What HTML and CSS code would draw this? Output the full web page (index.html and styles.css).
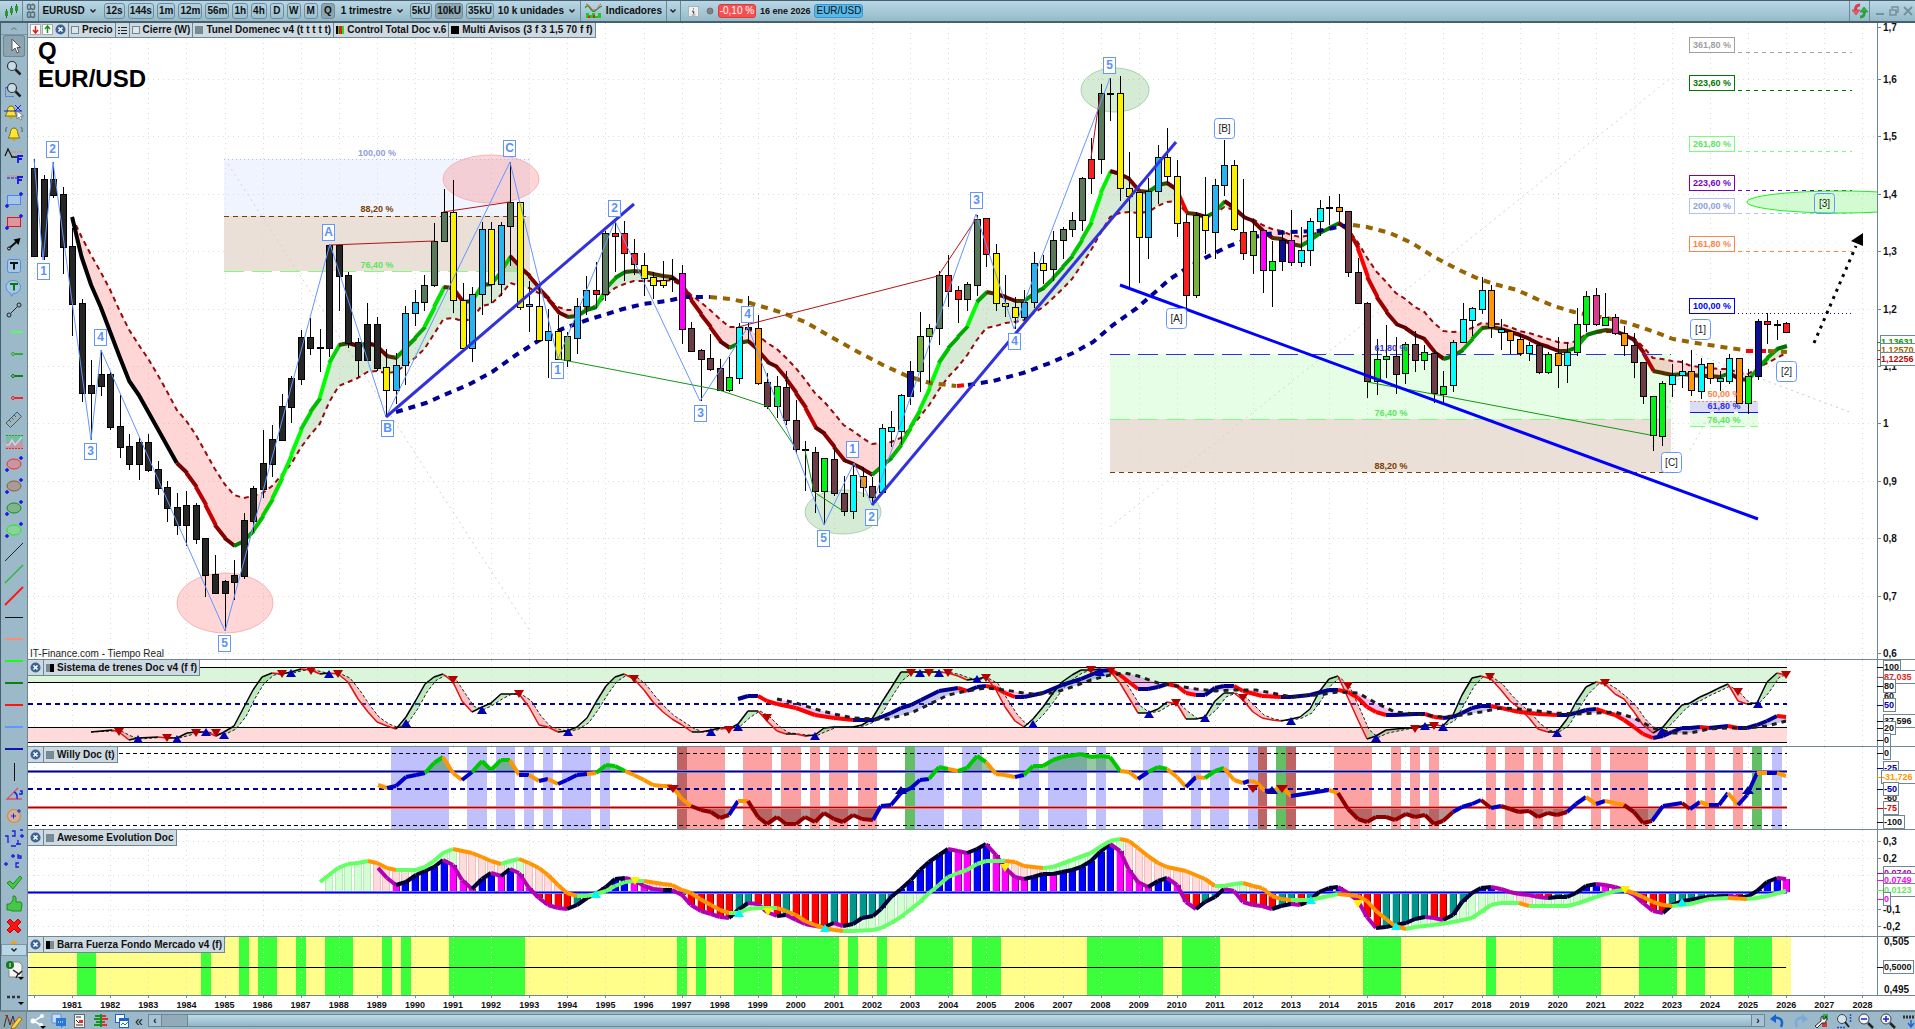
FILE: index.html
```html
<!DOCTYPE html>
<html lang="es">
<head>
<meta charset="utf-8">
<title>EUR/USD - 1 trimestre</title>
<link rel="stylesheet" href="styles.css">
</head>
<body>
<svg class="sprite" aria-hidden="true">
  <symbol id="chev" viewBox="0 0 8 8"><path d="M1.500 2.500 4 5l2.500-2.500" fill="none" stroke="#222" stroke-width="1.500"/></symbol>
  <symbol id="close" viewBox="0 0 12 12"><circle cx="6" cy="6" r="5.500" fill="#3c6496"/><path d="M3.800 3.800l4.400 4.400M8.200 3.800L3.800 8.200" stroke="#fff" stroke-width="1.800"/></symbol>
  <symbol id="bell" viewBox="0 0 22 22"><path d="M5 15c2-2 2-4 2.500-6.500C8 6 9.500 5 11 5s3 1 3.500 3.500C15 11 15 13 17 15z" fill="#ffe632" stroke="#7a6a10"/><path d="M9.500 15.500h3v2h-3z" fill="#c8a000"/></symbol>
  <symbol id="mag" viewBox="0 0 22 22"><circle cx="9" cy="9" r="4.500" fill="#c3dce8" stroke="#333" stroke-width="1.200"/><path d="M12.500 12.500l5 5" stroke="#222" stroke-width="2.500"/></symbol>
  <symbol id="marks" viewBox="0 0 22 22"><path d="M2 17h4M4 15v4M16 5h4M18 3v4" stroke="#1414e6" stroke-width="1.500"/></symbol>
  <symbol id="plug" viewBox="0 0 22 22"><circle cx="10" cy="11" r="1.500" fill="none" stroke="currentColor"/><path d="M12 11h8" stroke="currentColor" stroke-width="1.800"/></symbol>
</svg>

<div class="app">
<header class="topbar">
  <div class="cell logo"><svg width="16" height="16"><path d="M3.500 6v9M8.500 3v9M13.500 1v9" stroke="#1e6e1e"/><path d="M2 8h3v5H2zM7 5h3v5H7zM12 3h3v5h-3z" fill="#2d962d"/></svg></div>
  <div class="cell link"><svg width="10" height="16" fill="none" stroke="#5a6e78"><path d="M4.500 2v3a1.500 1.500 0 0 1-3 0V3.500a1 1 0 0 1 3-1M5.500 2.500a1 1 0 0 1 3 1V5a1.500 1.500 0 0 1-3 0M4.500 10v3a1.500 1.500 0 0 1-3 0v-2a1 1 0 0 1 3-1M5.500 10a1 1 0 0 1 3 1v2a1.500 1.500 0 0 1-3 0" stroke-width="1.500"/></svg></div>
  <button class="drop symbol-drop">EURUSD<svg class="chev"><use href="#chev"/></svg></button>
  <div class="frames">
    <button>12s</button><button>144s</button><button>1m</button><button>12m</button><button>56m</button><button>1h</button><button>4h</button><button>D</button><button>W</button><button>M</button><button class="on">Q</button>
  </div>
  <button class="drop term">1 trimestre<svg class="chev"><use href="#chev"/></svg></button>
  <div class="frames">
    <button>5kU</button><button class="on">10kU</button><button>35kU</button>
  </div>
  <button class="drop units">10 k unidades<svg class="chev"><use href="#chev"/></svg></button>
  <button class="drop indic"><svg width="17" height="16"><path d="M0 5c4-7 6 6 10 3s4-4 7-5" fill="none" stroke="#1e961e" stroke-width="1.300"/><path d="M1 1c4 0 5 7 9 6s3-5 6-6" fill="none" stroke="#e65050"/><path d="M1 15v-5h3v2h3v-2h3v3h3v-3h3v5z" fill="#1ec81e"/><path d="M3 15v-2h2v2zm5 0v-3h2v3z" fill="#e61e1e"/></svg>Indicadores</button>
  <button class="more" aria-label="Más indicadores"><svg class="chev"><use href="#chev"/></svg></button>
  <div class="status">
    <svg width="11" height="11"><rect x=".5" y=".5" width="10" height="10" fill="#f0f0f0" stroke="#aab4b9"/><path d="M5.500 2v2M4 5h2v3.500M3.500 9h4" stroke="#969696"/></svg>
    <svg width="8" height="8"><circle cx="4" cy="4" r="3" fill="#828282" stroke="#6e6e6e"/></svg>
    <span class="chg">-0,10 %</span><span class="date">16 ene 2026</span><span class="pair">EUR/USD</span>
  </div>
  <div class="winbtns">
    <button class="refresh" aria-label="Actualizar"><svg width="16" height="16"><path d="M8 2C4 2 3 5 4 8" fill="none" stroke="#dc3c46" stroke-width="3"/><path d="M0 7h8l-4 5z" fill="#f05a64" stroke="#b42832" stroke-width=".5"/><path d="M8 14c4 0 5-3 4-6" fill="none" stroke="#28a03c" stroke-width="3"/><path d="M8 9l4-5 4 5z" fill="#28b43c" stroke="#147828" stroke-width=".5"/></svg></button>
    <button aria-label="Minimizar"><svg width="10" height="10"><path d="M1 8h8" stroke="#78909c" stroke-width="2"/></svg></button>
    <button aria-label="Restaurar"><svg width="10" height="10" fill="none" stroke="#78909c" stroke-width="1.500"><path d="M3 3V1h6v5H7M1 4h6v5H1z"/></svg></button>
    <button aria-label="Cerrar"><svg width="10" height="10"><path d="M1 1l8 8M9 1L1 9" stroke="#78909c" stroke-width="2"/></svg></button>
  </div>
</header>

<nav class="tools" aria-label="Herramientas de dibujo">
  <button class="scroll" aria-label="Subir"><svg width="8" height="8"><path d="M1.500 5 4 2.500 6.500 5" fill="none" stroke="#5a6e78"/></svg></button>
  <button class="tool on" aria-label="Cursor"><svg><path d="M9 4v12l3-3 2 5 2-1-2-4.500h3.500z" fill="#fff" stroke="#555"/></svg></button>
  <button class="tool" aria-label="Zoom"><svg><use href="#mag"/></svg></button>
  <button class="tool" aria-label="Zoom de zona"><svg><path d="M2.500 8.500v9h9M2.500 8.500H6" fill="none" stroke="#3c6edc" stroke-dasharray="2 1"/><use href="#mag"/></svg></button>
  <button class="tool" aria-label="Alerta en precio"><svg><use href="#bell" x="-3"/><path d="M12 4l6 6M18 4l-6 6M1 10h18" stroke="#1e1edc"/><path d="M14 10v8l2-2 1.500 3 1.500-1-1.500-3h3z" fill="#fff" stroke="#555" stroke-width=".6"/></svg></button>
  <button class="tool" aria-label="Alerta"><svg><use href="#bell"/><path d="M4 4q-2 2-1 5M18 4q2 2 1 5" fill="none" stroke="#555"/></svg></button>
  <button class="tool" aria-label="Fibonacci extensión"><svg><path d="M2 11l3-7 4 8h5" fill="none" stroke="#111" stroke-width="1.200"/><path d="M8 7h12" stroke="#ff7828" stroke-dasharray="2 1"/><path d="M8 12h6" stroke="#111"/><path d="M15 18v-7h5M15 14h4" fill="none" stroke="#1414e6" stroke-width="1.800"/></svg></button>
  <button class="tool" aria-label="Fibonacci"><svg><path d="M4 9h14" stroke="#ff7828" stroke-dasharray="2 1"/><path d="M4 11h10" stroke="#1414e6" stroke-dasharray="3 1"/><path d="M15 17v-7h5M15 13h4" fill="none" stroke="#1414e6" stroke-width="1.800"/></svg></button>
  <button class="tool" aria-label="Rectángulo azul"><svg><rect x="4.500" y="6.500" width="13" height="9" fill="#a5c8e6" stroke="#5082f0"/><use href="#marks"/></svg></button>
  <button class="tool" aria-label="Rectángulo rojo"><svg><rect x="4.500" y="6.500" width="13" height="9" fill="#dc96a0" stroke="#e61414"/><use href="#marks"/></svg></button>
  <button class="tool" aria-label="Flecha"><svg><circle cx="6" cy="15.500" r="1.500" fill="none" stroke="#111"/><path d="M7 14.500l8-7" stroke="#111" stroke-width="2"/><path d="M17.500 5l-7 1.500 5 5.500z"/></svg></button>
  <button class="tool" aria-label="Texto"><svg><rect x="4.500" y="4.500" width="13" height="13" rx="2" fill="#a5c8e6" stroke="#5a8cdc"/><path d="M8 9V8h6v1M11 8v6.500" fill="none" stroke="#111" stroke-width="2"/></svg></button>
  <button class="tool" aria-label="Comentario"><svg><path d="M11 3.500a7 6.500 0 1 1-1 13l-1.500 3-1-3.500A7 6.500 0 0 1 11 3.500z" fill="#a5c8e6" stroke="#5a8cdc"/><path d="M8 8V7h6v1M11 7v6.500" fill="none" stroke="#0a780a" stroke-width="2"/></svg></button>
  <button class="tool" aria-label="Segmento"><svg fill="none" stroke="#222"><circle cx="6" cy="16" r="2"/><circle cx="16" cy="6" r="2"/><path d="M7.500 14.500l7-7"/></svg></button>
  <button class="tool light" aria-label="Horizontal verde claro"><svg><use href="#plug"/></svg></button>
  <button class="tool green" aria-label="Horizontal verde"><svg><use href="#plug"/></svg></button>
  <button class="tool dark" aria-label="Horizontal verde oscuro"><svg><use href="#plug"/></svg></button>
  <button class="tool red" aria-label="Horizontal roja"><svg><use href="#plug"/></svg></button>
  <button class="tool" aria-label="Regla"><svg><path d="M3 14L14 3l4.500 4.500-11 11z" fill="#a0b4be" stroke="#465a64"/><path d="M6 11l2 2M8.500 8.500l2 2M11 6l2 2" stroke="#465a64"/></svg></button>
  <button class="tool" aria-label="Canal"><svg><path d="M3 4h17v7H3z" fill="#78bea0"/><path d="M3 11h17v7H3z" fill="#c8969b"/><path d="M3 4.500h17" stroke="#28a028" stroke-dasharray="2 1"/><path d="M3 17.500h17" stroke="#e63232" stroke-dasharray="2 1"/><path d="M3 14h3l3-5 3 5 7-8" fill="none" stroke="#c8d2ff" stroke-width="1.500"/></svg></button>
  <button class="tool" aria-label="Elipse roja"><svg><ellipse cx="11" cy="11" rx="7" ry="5" fill="#c896a0" stroke="#ff2828"/><use href="#marks"/></svg></button>
  <button class="tool" aria-label="Elipse marrón"><svg><ellipse cx="11" cy="11" rx="7" ry="5" fill="#aa9b96" stroke="#8c5a32"/><use href="#marks"/></svg></button>
  <button class="tool" aria-label="Elipse verde"><svg><ellipse cx="11" cy="11" rx="7" ry="5" fill="#82b48c" stroke="#148c1e"/><use href="#marks"/></svg></button>
  <button class="tool" aria-label="Elipse verde claro"><svg><ellipse cx="11" cy="11" rx="7" ry="5" fill="#8cd296" stroke="#14f01e"/><use href="#marks"/></svg></button>
  <button class="tool" aria-label="Línea negra"><svg><path d="M2 20L20 2" stroke="#222"/></svg></button>
  <button class="tool" aria-label="Línea verde"><svg><path d="M2 20L20 2" stroke="#32b432" stroke-width="1.500"/></svg></button>
  <button class="tool" aria-label="Línea roja"><svg><path d="M2 20L20 2" stroke="#ff1414" stroke-width="1.800"/></svg></button>
  <button class="tool" aria-label="Nivel negro"><svg><path d="M2 10.500h18" stroke="#111"/></svg></button>
  <button class="tool" aria-label="Nivel salmón"><svg><path d="M2 10h18" stroke="#fa8c78" stroke-width="2"/></svg></button>
  <button class="tool" aria-label="Nivel verde claro"><svg><path d="M2 10h18" stroke="#14ff14" stroke-width="2"/></svg></button>
  <button class="tool" aria-label="Nivel verde"><svg><path d="M2 10h18" stroke="#0a820a" stroke-width="2"/></svg></button>
  <button class="tool" aria-label="Nivel rojo"><svg><path d="M2 10h18" stroke="#ff1414" stroke-width="2"/></svg></button>
  <button class="tool" aria-label="Nivel azul claro"><svg><path d="M2 10h18" stroke="#6496ff" stroke-width="2"/></svg></button>
  <button class="tool" aria-label="Nivel azul"><svg><path d="M2 10h18" stroke="#1414aa" stroke-width="2"/></svg></button>
  <button class="tool" aria-label="Vertical"><svg><path d="M11.500 2v18" stroke="#111"/></svg></button>
  <button class="tool" aria-label="Ángulo"><svg><path d="M19 16H4L15 5" fill="none" stroke="#dc5064" stroke-width="1.300"/><path d="M11 9q4 2 3 7M17 8h2v3h-3" fill="none" stroke="#1e1edc" stroke-width="1.500"/></svg></button>
  <button class="tool" aria-label="Círculo"><svg><circle cx="11" cy="11" r="6.500" fill="#c8b4a0" stroke="#f08232" stroke-width="1.200"/><path d="M8 11h5M10.500 8.500v5M14 6h4M16 4v4" stroke="#1e1edc"/></svg></button>
  <button class="tool" aria-label="Ondas de Elliott"><svg><path d="M3 8l4 8 4-11 3 9 5-10" fill="none" stroke="#8caaf0"/><path d="M2 9h3v7M9 4h3v5H9M13 17h5M17 3h3M15 13v5M8 19h5M17 9h4M19 7v4" fill="none" stroke="#1e1edc" stroke-width="1.300"/></svg></button>
  <button class="tool" aria-label="Onda correctiva"><svg><path d="M3 16l7-11 4 10 4-6" fill="none" stroke="#8caaf0"/><path d="M1 15h4M3 13v4M8 7h4M10 5v4M15 5v4h3V7h-3M16 14h-3v4h3" fill="none" stroke="#1e1edc" stroke-width="1.300"/></svg></button>
  <button class="tool" aria-label="Válido"><svg><path d="M4 12l3-2 3 3 7-8 2 2-9 11z" fill="#46c846" stroke="#1e8c1e"/></svg></button>
  <button class="tool" aria-label="Me gusta"><svg><path d="M4 11h3l3-4V3h2l1 2v4h5l1 2-1 7H9l-2-1H4z" fill="#46c846" stroke="#1e8c1e"/></svg></button>
  <button class="tool" aria-label="Borrar"><svg><path d="M7 4l4 4 4-4 3 3-4 4 4 4-3 3-4-4-4 4-3-3 4-4-4-4z" fill="#fa1414" stroke="#c80000"/></svg></button>
  <div class="tool-cut"><svg width="22" height="7"><path d="M11 3l4 4H7z" fill="#f0a01e"/></svg></div>
  <button class="scroll down" aria-label="Bajar"><svg class="chev"><use href="#chev"/></svg></button>
  <button class="tool tall" aria-label="Ajustes de dibujo"><svg><path d="M9 3h7l3 3v12H6v-7" fill="#f5f5f5" stroke="#888"/><circle cx="7" cy="6" r="4" fill="#14781e"/><path d="M7 4v4" stroke="#fff"/><path d="M10 11l6 4 3-3M15 15l-2 4" stroke="#222" stroke-width="1.500" fill="none"/><path d="M15 18h6l-3 3z"/></svg></button>
  <button class="tool tall" aria-label="Más"><svg><path d="M4 11h3M9 11h3M14 11h3" stroke="#333" stroke-width="2.500"/><path d="M15 16h6l-3 3z"/></svg></button>
</nav>

<main class="charts">
  <section class="panel">
    <svg class="plot" id="price" role="img" aria-label="EUR/USD trimestral"></svg>
    <div class="legend main-legend">
      <span class="ico"><svg width="36" height="12"><rect x=".5" y=".5" width="10" height="10" fill="#fff" stroke="#aaa"/><path d="M5.500 2v7M3 6l2.500 3L8 6" stroke="#dc1e1e" stroke-width="1.500" fill="none"/><rect x="12.500" y=".5" width="10" height="10" fill="#fff" stroke="#aaa"/><path d="M17.500 9V2M15 5l2.500-3L20 5" stroke="#14961e" stroke-width="1.500" fill="none"/><use href="#close" x="25" width="11" height="11"/></svg></span>
      <span><i class="sq"></i>Precio</span>
      <span class="list"><svg width="9" height="9"><path d="M0 1.500h2M0 4.500h2M0 7.500h2M3 1.500h6M3 4.500h6M3 7.500h6" stroke="#222"/></svg></span>
      <span><i class="sq"></i>Cierre (W)</span>
      <span><i class="sq grey"></i>Tunel Domenec v4 (t t t t t)</span>
      <span><i class="sq multi"></i>Control Total Doc v.6</span>
      <span><i class="sq black"></i>Multi Avisos (3 f 3 1,5 70 f f)</span>
    </div>
    <h1 class="title">Q<br>EUR/USD</h1>
  </section>
  <section class="panel">
    <svg class="plot" id="trenes" role="img" aria-label="Sistema de trenes"></svg>
    <div class="legend"><button aria-label="Cerrar panel"><svg width="11" height="11"><use href="#close"/></svg></button><span><i class="sq half"></i>Sistema de trenes Doc v4 (f f)</span></div>
  </section>
  <section class="panel">
    <svg class="plot" id="willy" role="img" aria-label="Willy Doc"></svg>
    <div class="legend"><button aria-label="Cerrar panel"><svg width="11" height="11"><use href="#close"/></svg></button><span><i class="sq grey"></i>Willy Doc (t)</span></div>
  </section>
  <section class="panel">
    <svg class="plot" id="awesome" role="img" aria-label="Awesome Evolution"></svg>
    <div class="legend"><button aria-label="Cerrar panel"><svg width="11" height="11"><use href="#close"/></svg></button><span><i class="sq grey"></i>Awesome Evolution Doc</span></div>
  </section>
  <section class="panel">
    <svg class="plot" id="barra" role="img" aria-label="Barra Fuerza"></svg>
    <div class="legend"><button aria-label="Cerrar panel"><svg width="11" height="11"><use href="#close"/></svg></button><span><i class="sq half rev"></i>Barra Fuerza Fondo Mercado v4 (f)</span></div>
  </section>
  <section class="panel years"><svg class="plot" id="years" role="img" aria-label="Años"></svg></section>
</main>

<footer class="bottombar">
  <button class="pencil" aria-label="Dibujar"><svg width="20" height="16"><path d="M1 14L4 2l3 10 3-9 2 8" fill="none" stroke="#333"/><path d="M2 2l10 11" stroke="#dc3232"/><path d="M9 13l7-9 3 2-7 9-4 1z" fill="#ffd23c" stroke="#a06e14"/></svg></button>
  <button aria-label="Compartir"><svg width="16" height="16"><path d="M12 3L4 8l8 5" fill="none" stroke="#fff" stroke-width="1.500"/><circle cx="12" cy="3" r="2" fill="#fff"/><circle cx="3" cy="8" r="2.500" fill="#fff"/><circle cx="11" cy="12" r="2" fill="#fff"/><path d="M10 13h6l-3 3z"/></svg></button>
  <button aria-label="Chat"><svg width="16" height="16"><rect x="1" y="1" width="9" height="9" rx="1" fill="#c8dcff" stroke="#5a8cdc"/><path d="M5 5h10v8h-3l-2 2v-2H5z" fill="#2878dc"/><path d="M7 9h6" stroke="#fff" stroke-dasharray="1 1"/></svg></button>
  <button aria-label="Órdenes"><svg width="16" height="16"><rect x="2.500" y="1.500" width="10" height="13" fill="#f5f5f5" stroke="#666"/><path d="M4 4h5M4 7l3 3M4 12h7" stroke="#333"/><path d="M7 7h4v3H7z" fill="#dc3232"/></svg></button>
  <button aria-label="Libro"><svg width="16" height="16"><path d="M2 3h6M1 6h7M3 9h5M1 12h7" stroke="#14961e" stroke-width="2"/><path d="M8 3h5M8 6h7M8 9h4M8 12h6" stroke="#dc3232" stroke-width="2"/><path d="M8 1v13" stroke="#14961e" stroke-width="2"/></svg></button>
  <button aria-label="Ventanas"><svg width="16" height="16"><rect x="1.500" y="1.500" width="9" height="8" fill="#fff" stroke="#1e64c8"/><rect x="5.500" y="5.500" width="9" height="9" fill="#fff" stroke="#1e64c8"/><path d="M6 7h9" stroke="#1e64c8" stroke-width="2"/><path d="M7 12l2-2 2 2 3-3" fill="none" stroke="#14961e"/></svg></button>
  <button class="quo" aria-label="Contraer">«</button>
  <div class="track"><button aria-label="Izquierda">‹</button><div class="thumb"></div><button aria-label="Derecha">›</button></div>
  <div class="navbtns">
    <button aria-label="Deshacer"><svg width="16" height="16"><path d="M4 5c6-1 10 2 7 9" fill="none" stroke="#1464d2" stroke-width="2.500"/><path d="M0 6l6-5v9z" fill="#1464d2"/></svg></button>
    <button aria-label="Rehacer"><svg width="16" height="16"><path d="M12 5c-6-1-10 2-7 9" fill="none" stroke="#78aadc" stroke-width="2.500"/><path d="M16 6l-6-5v9z" fill="#78aadc"/></svg></button>
    <button aria-label="Configurar"><svg width="16" height="16"><path d="M9 1h5v6H9z" fill="#28b43c"/><path d="M8 9h5v5H8z" fill="#dc3232"/><path d="M1 13l6-5V4l2-1v3h2l1-3 1 3-2 4H8l-5 5z" stroke="#333" fill="#eee"/></svg></button>
    <button aria-label="Zoom automático"><svg width="16" height="16"><circle cx="6" cy="6" r="4.500" fill="#d2e6f0" stroke="#444"/><path d="M9 9l4 5" stroke="#222" stroke-width="2"/><path d="M14.500 1v9M1 14.500h9" stroke="#1e50dc" stroke-width="1.500" stroke-dasharray="2 1"/></svg></button>
    <button aria-label="Alejar"><svg width="16" height="16"><circle cx="6" cy="6" r="5" fill="#f0f5fa" stroke="#444"/><path d="M10 10l5 5" stroke="#222" stroke-width="2.500"/><path d="M3 6h6" stroke="#1e1edc" stroke-width="1.500"/></svg></button>
    <button aria-label="Acercar"><svg width="16" height="16"><circle cx="6" cy="6" r="5" fill="#f0f5fa" stroke="#444"/><path d="M10 10l5 5" stroke="#222" stroke-width="2.500"/><path d="M3 6h6M6 3v6" stroke="#1e1edc" stroke-width="1.500"/></svg></button>
    <button aria-label="Ocultar barra"><svg width="13" height="16"><path d="M1 4h12" stroke="#333" stroke-width="3" stroke-dasharray="2 1"/><path d="M9 7v6M6 10l3 4 3-4" stroke="#1e64dc" fill="none" stroke-width="1.500"/></svg></button>
  </div>
</footer>
</div>
<script src="chart.js"></script>
</body>
</html>
```
FILE: styles.css
```css
* { box-sizing: border-box; }
html, body { height: 100%; }
body { margin: 0; font: bold 10px/12px "Liberation Sans", Arial, sans-serif; color: #111; overflow: hidden; }
button { font: inherit; color: inherit; border: 0; padding: 0; margin: 0; background: none; display: flex; align-items: center; justify-content: center; }
svg { display: block; flex: none; }
.sprite { position: absolute; width: 0; height: 0; }
.chev { width: 8px; height: 8px; }

.app { display: grid; height: 100vh; grid-template-columns: 28px minmax(0, 1fr); grid-template-rows: 23px minmax(0, 1fr) 19px; }

.topbar { grid-column: 1 / -1; display: flex; align-items: stretch; background: linear-gradient(#b9d7e6, #96bac9); border-top: 1px solid #46606e; border-bottom: 2px solid #46606e; }
.cell { display: flex; align-items: center; justify-content: center; border-right: 1px solid #6e8791; }
.logo { width: 23px; }
.link { width: 16px; }
.drop { gap: 4px; }
.symbol-drop { width: 61px; }
.frames { display: flex; align-items: center; gap: 3px; }
.symbol-drop + .frames { margin-left: 4px; }
.frames button { height: 16px; padding: 0 1px; border: 1px solid #6e8c9b; border-radius: 3px; min-width: 14px; }
.frames .on { background: #8ca5b1; }
.term { width: 75px; }
.units { width: 87px; border-right: 1px solid #6e8791; }
.indic { width: 86px; border-right: 1px solid #6e8791; }
.more { width: 14px; border-right: 1px solid #6e8791; }
.status { display: flex; align-items: center; gap: 4px; padding-left: 7px; font-weight: normal; }
.status svg:first-child { margin-right: 3px; }
.chg { background: #f55050; border: 1px solid #dc3c3c; border-radius: 3px; color: #fff; width: 38px; text-align: center; }
.date { font-weight: bold; font-size: 9px; }
.pair { background: #55b9eb; border: 1px solid #3c96c8; border-radius: 3px; width: 49px; text-align: center; }
.winbtns { margin-left: auto; display: flex; }
.winbtns button { width: 14px; }
.winbtns .refresh { width: 21px; border: solid #6e8791; border-width: 0 1px; margin-right: 3px; }

.tools { display: flex; flex-direction: column; background: #9bb9c8; border-left: 1px solid #46606e; border-right: 1px solid #6e8791; overflow: hidden; }
.scroll { height: 12px; width: 100%; flex: none; border-bottom: 1px solid #7d96a3; }
.scroll.down { border: 1px solid #7d96a3; background: #b9d7e6; }
.tool { width: 22px; height: 22px; margin-left: 2px; flex: none; border-radius: 3px; }
.tool svg { width: 22px; height: 22px; }
.tool.on { background: #8ca5b1; box-shadow: inset 0 0 0 1px #6e8791; }
.tool.tall { height: 27px; }
.tool.light { color: #5aff5a; }
.tool.green { color: #28aa28; }
.tool.dark { color: #0a780a; }
.tool.red { color: #ff1414; }
.tool-cut { height: 7px; flex: none; padding-left: 2px; }

.charts { display: grid; grid-template-rows: minmax(0, 1fr) 87px 83px 107px 59px 14px; background: #fff; }
.panel { position: relative; border-bottom: 1px solid #6e8791; min-height: 0; }
.panel.years { border-bottom: 0; }
.plot { width: 100%; height: 100%; overflow: hidden; }
.legend { position: absolute; left: 0; top: 0; display: flex; height: 16px; background: #cddae1; border: solid #6e8791; border-width: 0 1px 1px 0; }
.main-legend { height: 15px; }
.legend > * { display: flex; align-items: center; gap: 3px; padding: 0 2px; border-left: 1px solid #6e8791; white-space: nowrap; }
.legend > :first-child { border-left: 0; padding: 0 2px; }
.legend .sq { width: 8px; height: 8px; border: 1px solid #78878f; background: #dce6eb; }
.legend .grey { background: #788c96; }
.legend .black { background: #000; border-color: #000; }
.legend .half { background: linear-gradient(90deg, #788c96 50%, #000 50%); border: 0; }
.legend .rev { background: linear-gradient(90deg, #000 50%, #788c96 50%); }
.legend .multi { background: linear-gradient(90deg, #000 20%, #1edc1e 20% 40%, #e61e1e 40% 80%, #1edc1e 80%); border: 0; }
.title { position: absolute; left: 10px; top: 14px; margin: 0; font-size: 24px; line-height: 28px; color: #000; }

.bottombar { grid-column: 1 / -1; display: flex; align-items: center; background: #9bb9c8; border-top: 2px solid #6e8791; gap: 5px; }
.bottombar .pencil { width: 27px; margin-right: -2px; height: 100%; background: #8ca5b1; border-right: 1px solid #6e8791; }
.quo { font-size: 14px; font-weight: normal; }
.track { flex: 1; display: flex; height: 13px; background: linear-gradient(#bddbe9, #91b6c6); border: 1px solid #6e8791; }
.track button { width: 13px; background: #a5c3d2; border-right: 1px solid #6e8791; }
.track button:last-child { margin-left: auto; border-left: 1px solid #6e8791; border-right: 0; }
.thumb { width: 26px; background: #91abb9; border-right: 1px solid #6e8791; }
.navbtns { display: flex; gap: 6px; }

.t9 { font: bold 9px "Liberation Sans", Arial, sans-serif; }
.t10 { font: bold 10px "Liberation Sans", Arial, sans-serif; }
.tag { font: bold 12px "Liberation Sans", Arial, sans-serif; }
.plain { font: 10px "Liberation Sans", Arial, sans-serif; }
```
FILE: chart.js
```js
// Design space: plots start at x=28, quarterly bars are 9.523 units apart.
const X0 = 28, DW = 1887, BAR0 = 34, STEP = 9.523, AXIS = 1877;
const barX = i => BAR0 + STEP * i;

// Quarterly candles: colour, body top, body bottom, high, low
const CANDLES = `k168,256,159,256 k179,256,175,260 k179,195,162,198 k194,247,187,274 k246,304,228,336 k303,393,299,402 k385,393,360,440 k374,386,350,396 k374,427,371,430 k426,447,395,458
k446,464,434,470 k442,464,438,480 k442,470,434,472 k469,488,461,495 k487,508,481,522 k507,525,493,535 k505,525,491,546 k505,539,503,544 k538,575,538,597 k574,593,555,594
k581,593,580,631 k575,582,560,600 k520,576,513,579 k488,521,486,532 k463,489,430,498 k439,464,425,477 k406,440,394,440 k378,407,376,423 k337,379,330,385 k337,348,318,355
k347,348,329,372 k245,348,244,357 k245,276,245,311 k275,343,272,348 k342,360,338,377 k324,360,303,361 k324,368,317,371 Y367,390,349,417 b365,390,353,404 b313,365,306,385
b302,313,290,326 g285,302,275,311 g241,285,223,287 g212,241,189,241 Y212,300,180,313 Y300,348,283,348 b294,348,287,362 b229,294,222,315 Y229,284,222,303 b225,284,222,296
g202,226,162,266 Y202,307,202,310 b304,306,281,332 Y306,340,281,340 b331,340,309,378 Y331,359,315,360 L336,360,332,367 b306,338,298,354 b290,306,276,315 R290,294,262,308
g233,294,231,301 R233,236,221,272 R233,253,221,281 R253,264,239,275 Y265,278,253,296 Y277,285,272,299 Y280,285,261,288 k278,279,259,292 M273,329,265,344 W328,351,322,352
W350,359,349,401 W358,369,334,371 W368,390,359,390 G377,390,357,392 C327,378,323,384 k327,329,296,341 O328,383,315,385 W382,406,373,409 G386,406,376,418 W387,420,371,425
W420,449,400,454 k449,450,441,491 W452,491,447,513 G458,491,458,525 W459,493,447,496 W493,511,476,516 C475,511,463,519 O476,487,467,497 W486,497,477,505 C428,492,424,492
C427,431,411,447 C395,431,394,445 N371,396,361,405 L336,371,312,392 L328,336,324,383 g275,328,271,345 R275,291,255,307 R290,299,286,323 g284,299,282,311 g219,285,215,296
R218,254,218,267 Y253,303,244,311 Y303,306,275,317 Y307,317,297,329 b302,317,290,320 b263,302,252,308 Y263,270,255,284 g240,269,231,281 g229,240,227,259 g220,229,212,237
g178,220,177,231 R159,178,138,194 g93,159,84,174 k93,94,78,121 Y93,188,76,201 Y188,196,152,287 Y192,237,192,283 b191,237,178,259 b157,191,145,204 Y157,176,128,183
Y176,223,160,237 R222,295,214,317 L215,295,212,298 Y215,230,177,254 b185,232,179,259 b165,185,140,196 Y165,229,160,231 R232,253,179,260 L231,255,219,274 M230,270,230,293
G261,270,241,307 N240,261,230,271 M240,262,210,266 C250,262,227,267 C221,250,218,266 C208,221,200,236 k207,208,196,225 O207,211,194,222 W211,272,211,277 W272,303,258,303
W303,381,302,398 G359,381,339,395 G356,359,325,378 W356,374,337,394 G344,373,342,384 W344,360,331,372 G352,360,345,370 W353,393,350,403 G386,394,371,403 C342,385,340,392
C319,342,303,343 C308,320,307,336 C290,309,277,314 O290,327,285,338 C329,332,319,350 O331,340,330,354 O339,353,334,356 C345,353,342,361 W345,372,343,374 G354,372,352,374
O353,365,337,388 C352,365,342,383 G324,352,308,356 G296,324,291,332 P295,324,288,326 G317,325,293,326 P317,333,314,335 O333,345,326,356 W345,362,333,378 W362,396,362,404
G396,435,396,451 G383,436,381,446 C375,384,364,397 C371,375,360,388 O371,390,350,396 C364,391,358,399 O363,378,363,384 C378,381,371,391 C358,381,354,384 O358,403,358,404
G376,403,369,414 N321,376,319,380 R321,324,313,344 k324,325,320,340 R323,332,322,333`.split(/\s+/);
const FILL = { k: '#262626', Y: '#faf000', b: '#28b4f0', g: '#5a785a', L: '#78b43c', R: '#ff1e1e', M: '#ff00ff', W: '#6e3c46', G: '#00f514', C: '#00ffff', O: '#ff960a', N: '#0f0f91', P: '#dc3c8c' };

// Tunnel averages, from bar 4 on
const SLOW = [217,257,285,307,332,357,381,395,412,429,446,463,473,487,505,525,538,546,541,531,516,499,478,455,430,412,398,363,345,343,346,343,346,356,358,348,338,327,307,287,288,302,301,285,284,272,256,267,276,288,299,312,317,316,310,307,289,278,272,271,272,274,276,277,285,300,314,327,341,348,343,341,350,362,367,379,393,408,427,434,447,460,464,469,475,466,458,445,428,410,388,363,348,337,326,302,292,294,297,301,301,293,288,278,267,256,240,222,193,171,174,179,191,192,185,183,190,213,214,217,212,201,208,217,221,231,238,239,244,246,240,233,228,223,230,248,277,297,312,324,328,335,339,352,359,356,350,339,328,327,329,332,335,339,344,347,351,351,347,335,332,330,331,335,340,353,371,373,375,374,375,376,376,377,373,379,380,368,358,349,346];
const WIDE = [217,237,255,272,290,311,330,345,359,375,392,410,421,435,452,469,484,495,498,496,493,486,475,464,448,435,424,402,386,382,378,372,371,373,372,365,358,349,334,319,318,321,319,306,304,295,283,286,288,293,299,307,310,310,308,306,296,288,284,281,281,281,281,280,286,295,302,310,319,327,327,329,335,343,349,358,368,380,393,402,413,425,431,438,444,443,442,438,428,417,405,390,377,367,355,340,328,326,323,322,320,313,307,298,289,279,265,250,233,217,213,212,213,212,206,202,201,213,213,218,214,207,210,217,219,225,229,231,235,237,235,232,228,224,230,242,258,272,282,293,299,307,312,323,331,332,331,328,323,324,324,327,331,333,336,339,342,343,341,334,333,332,332,335,338,347,358,359,361,362,366,367,368,369,369,373,374,368,363,358,353];

const pairs = s => s.trim().split(/\s+/).map(p => p.split(',').map(Number));
const LONG = [
  ['#000096', '396,412 426,403 444,395 468,385 492,372 516,355 538,341 562,329 587,320 607,314 623,309 643,304 667,301 685,297 710,297'],
  ['#966400', '710,297 730,299 750,303 767,308 783,313 805,322 833,338 860,353 883,365 907,376 930,383 956,386'],
  ['#ff0000', '957,386 967,385'],
  ['#000096', '968,385 993,381 1023,373 1050,363 1073,353 1093,342 1113,325 1137,308 1153,294 1170,279 1187,268 1207,257 1227,247 1247,239 1267,234 1290,232 1318,231 1338,227 1350,225'],
  ['#966400', '1353,225 1367,227 1390,233 1412,243 1434,257 1457,269 1479,279 1494,284 1517,290 1539,300 1554,306 1574,312 1606,318 1628,323 1655,332 1673,339 1696,343 1722,347 1744,350'],
  ['#ff0000', '1746,351 1768,351'], ['#966400', '1768,351 1787,352']];
const ZIGZAG = '34,159 43,260 53,162 91,440 101,350 225,631 330,244 386,417 510,162 558,359 615,221 700,401 748,327 824,525 854,463 872,505 976,214 1014,329 1110,78';
const WAVES = 'A,328,232 2,52,149 1,43,271 4,100,337 3,90,451 5,224,643 B,387,428 C,509,148 1,557,370 2,614,208 3,700,413 4,747,314 1,852,449 5,823,538 2,871,517 3,976,200 4,1014,341 5,1109,65';
const BIGWAVES = '[A],1176,318 [B],1224,128 [C],1671,462 [1],1700,329 [2],1786,371 [3],1824,383';

const TRAIN = pairs('91,732 112,730 119,732 129,740 138,738 158,737 167,738 177,738 187,733 196,732 206,732 216,736 224,732 234,726 244,707 253,690 262,677 272,673 282,674 291,672 301,669 311,670 320,674 329,673 338,674 348,682 358,699 368,712 377,722 387,726 396,729 406,717 416,700 425,684 434,677 443,674 453,682 462,701 472,712 482,707 491,703 501,694 510,694 519,694 529,707 539,725 548,727 558,732 567,731 577,727 587,718 596,702 606,686 615,677 624,674 634,679 644,690 653,702 663,712 672,719 682,725 692,732 701,732 711,730 720,728 729,729 738,724 748,711 758,711 767,721 777,731 786,734 796,734 805,736 815,735 824,728 834,727 853,727 862,725 872,719 882,702 891,688 901,672 911,672 921,672 930,672 939,672 948,673 958,676 967,680 977,679 986,677 996,690 1005,707 1015,721 1024,727 1033,719 1043,707 1053,693 1062,682 1072,675 1081,670 1091,670 1100,669 1110,671 1120,683 1129,698 1138,713 1148,713 1158,709 1167,702 1177,704 1186,719 1196,719 1205,717 1215,701 1224,693 1234,693 1243,700 1253,712 1262,718 1272,720 1281,721 1291,719 1300,717 1310,709 1319,692 1329,679 1338,676 1348,698 1358,720 1367,739 1376,736 1386,730 1406,728 1415,728 1425,725 1434,725 1443,726 1453,715 1462,695 1472,678 1481,676 1491,679 1501,690 1510,701 1519,708 1529,718 1538,729 1548,732 1557,732 1567,719 1576,702 1586,687 1596,682 1605,684 1615,694 1624,699 1634,712 1643,725 1653,733 1663,727 1672,716 1682,705 1690,703 1700,697 1709,693 1719,688 1728,684 1738,701 1747,704 1757,703 1767,682 1777,673 1786,675');
const TRAIN_BIG = pairs('738,699 748,696 758,696 767,701 777,704 796,708 815,715 834,718 853,720 862,720 874,720 891,713 901,708 911,705 921,700 939,691 958,688 967,691 977,687 986,686 996,688 1005,693 1015,697 1024,697 1043,693 1062,685 1081,679 1100,671 1110,670 1120,675 1129,682 1138,689 1148,689 1158,687 1167,684 1177,686 1186,693 1196,695 1205,695 1215,688 1224,686 1234,686 1243,691 1262,696 1281,697 1291,697 1310,695 1329,690 1338,690 1348,692 1358,698 1367,707 1376,712 1386,715 1395,715 1415,714 1425,714 1434,717 1443,718 1453,717 1462,713 1472,708 1481,706 1491,706 1501,708 1510,710 1519,712 1529,713 1538,714 1557,715 1567,715 1576,713 1586,710 1596,709 1605,712 1615,715 1624,720 1634,727 1643,734 1653,738 1663,736 1672,732 1682,728 1690,728 1700,727 1709,728 1728,726 1738,728 1747,728 1757,725 1767,721 1777,716 1786,717');
const TRAIN_DASH = pairs('777,699 796,703 815,709 834,714 853,718 872,719 888,719 911,713 930,704 948,695 967,691 986,688 1005,690 1024,693 1033,694 1053,693 1072,687 1091,680 1110,675 1125,673 1138,676 1158,683 1177,686 1196,689 1215,691 1234,690 1256,690 1272,693 1292,697 1300,696 1319,695 1338,692 1358,693 1376,703 1395,712 1425,715 1443,717 1462,715 1481,712 1501,708 1519,709 1538,711 1557,713 1576,714 1596,713 1615,712 1634,718 1653,728 1672,733 1690,733 1709,729 1728,728 1747,728 1767,726 1786,721');
const TRAIN_DOWN = '119,732 167,738 196,733 216,733 282,674 311,671 338,674 453,680 519,694 634,679 729,730 767,718 911,673 929,673 948,673 986,678 1091,670 1111,671 1176,703 1243,698 1348,686 1415,729 1434,726 1490,677 1605,683 1738,692 1786,675';
const TRAIN_UP = '138,739 177,739 206,732 224,735 291,673 329,674 406,723 482,710 568,732 711,732 738,727 815,736 920,673 939,673 977,679 1033,724 1100,672 1149,714 1205,718 1291,721 1376,738 1425,726 1443,727 1557,733 1662,731 1758,704';

const WILLY = 'o378,785 o387,788 b396,786 b406,777 b416,775 b425,773 g434,763 g443,757 o453,773 o462,780 b472,772 g482,761 g491,770 g501,760 g510,760 o519,775 b529,775 o539,781 b548,779 o558,784 b567,780 b577,775 b587,774 o596,773 g606,765 g615,766 g625,771 o634,775 o644,780 o653,785 o663,786 o672,786 o682,799 o691,806 r701,810 r711,812 r720,818 r729,815 b738,801 o748,801 r758,817 r767,824 r777,817 r786,824 r796,824 r805,817 r815,822 r824,813 r834,819 r843,822 r853,815 r862,819 r873,820 b881,806 b891,805 b901,793 b911,788 b920,780 b929,779 g939,767 g948,769 o958,771 g967,768 g977,756 g986,762 o996,774 o1005,775 o1015,777 b1024,775 g1033,766 g1043,766 g1053,760 g1062,757 g1081,754 g1091,757 g1100,756 g1110,757 g1120,771 o1129,772 o1138,779 b1148,772 g1158,767 g1167,769 o1177,777 o1186,787 b1196,777 o1205,778 g1215,771 g1224,768 o1234,780 o1243,783 b1249,781 o1256,782 o1265,791 b1274,790 o1282,787 o1291,796 b1310,793 b1329,790 o1338,793 r1348,809 r1358,819 r1367,822 r1376,817 r1386,817 r1395,820 r1406,814 r1415,817 r1425,815 r1434,824 r1443,821 r1453,812 b1462,807 b1472,804 b1481,800 r1491,808 b1501,806 r1510,809 r1519,812 r1529,811 r1538,817 r1548,813 r1557,815 r1567,812 b1576,804 b1586,797 o1596,804 b1605,801 o1615,803 o1624,805 r1634,812 r1643,823 r1652,821 b1663,806 b1682,803 r1690,809 b1700,802 o1709,805 b1719,805 b1728,793 o1738,805 b1747,795 b1757,773 o1767,773 b1777,773 o1786,776'.split(' ');
const WILLY_BANDS = {
  '#c0c0fc': '391,449 467,487 496,515 524,534 543,553 562,591 600,610 915,944 962,982 1019,1039 1048,1087 1096,1106 1143,1163 1191,1201 1210,1229 1248,1258 1772,1782',
  '#fca2a2': '687,725 743,772 781,801 810,820 829,848 858,877 1334,1372 1391,1401 1410,1420 1429,1439 1486,1496 1505,1524 1533,1543 1553,1563 1591,1601 1610,1648 1686,1696 1705,1715 1733,1743',
  '#be6464': '677,687 1258,1267 1286,1296',
  '#64be64': '905,915 1276,1286 1752,1762'
};

const AO = pairs('378,868 387,878 396,885 406,882 416,875 425,871 434,867 443,860 453,865 462,880 472,889 482,879 491,873 501,876 510,869 519,873 529,888 539,898 548,905 558,908 567,909 577,905 587,898 596,894 606,887 615,879 625,878 634,880 644,886 653,889 663,890 672,890 682,895 691,905 701,911 711,914 720,917 729,918 738,910 748,903 758,904 767,912 777,916 786,915 796,920 805,924 815,926 824,927 834,923 843,926 853,924 862,918 873,916 881,909 891,897 901,889 911,880 920,870 929,862 939,855 948,849 958,851 967,853 977,849 986,844 996,855 1005,868 1015,877 1024,879 1033,877 1043,874 1053,874 1062,872 1072,870 1081,867 1091,861 1100,852 1110,844 1120,851 1129,870 1138,882 1148,887 1158,881 1167,878 1177,885 1186,902 1196,909 1205,902 1215,897 1224,889 1234,891 1243,902 1253,905 1262,906 1272,909 1281,906 1291,904 1300,905 1310,901 1319,892 1329,888 1338,887 1348,893 1358,901 1367,917 1376,928 1386,927 1395,925 1406,923 1415,919 1425,917 1434,918 1443,920 1453,915 1462,902 1472,893 1481,888 1491,887 1501,889 1510,892 1519,894 1529,895 1538,897 1548,898 1557,897 1567,897 1576,893 1586,886 1596,884 1605,885 1615,887 1624,890 1634,895 1643,903 1653,911 1663,913 1672,905 1682,901 1690,900 1700,898 1709,897 1728,896 1738,897 1747,897 1757,891 1767,882 1777,878 1786,879');
const AO_SIG = pairs('320,882 329,875 338,868 348,864 358,863 368,861 377,863 387,868 396,870 416,870 425,867 434,861 443,853 453,849 472,853 482,857 491,861 501,864 510,861 519,859 529,863 539,868 548,875 558,885 567,893 577,896 587,896 596,894 606,891 615,886 625,882 634,881 644,881 663,884 672,885 682,890 691,893 700,899 711,905 720,910 729,913 738,913 748,909 758,908 777,908 786,911 796,915 805,921 815,925 824,928 834,930 843,931 853,931 873,930 881,928 891,923 901,917 911,909 920,902 929,893 939,885 948,877 958,873 967,870 977,864 986,861 1005,861 1015,862 1024,866 1043,868 1053,867 1072,860 1091,853 1100,847 1110,841 1120,839 1129,841 1138,848 1148,856 1158,863 1167,867 1186,871 1205,879 1215,886 1224,886 1234,884 1243,883 1253,886 1262,888 1272,896 1281,899 1291,900 1310,900 1329,896 1338,894 1358,896 1367,901 1376,911 1386,919 1395,926 1406,929 1415,927 1434,925 1453,922 1472,918 1481,912 1491,905 1501,903 1519,903 1529,906 1538,906 1567,906 1576,904 1596,897 1605,894 1615,891 1624,890 1634,893 1643,897 1653,902 1663,905 1672,906 1690,904 1709,899 1728,898 1747,899 1757,898 1767,896 1786,891');
const FORCE = '77,96 201,211 239,249 258,277 296,306 325,353 382,392 401,411 449,525 677,687 696,706 734,772 782,839 848,858 877,887 915,953 972,1001 1087,1163 1182,1220 1363,1401 1486,1496 1553,1601 1639,1677 1686,1705 1734,1772';

function at(list, x) {
  for (let k = 1; k < list.length; k++) {
    if (x <= list[k][0]) {
      const [a, b] = [list[k - 1], list[k]];
      return x < a[0] - 1 ? null : a[1] + (b[1] - a[1]) * (x - a[0]) / (b[0] - a[0]);
    }
  }
  return list[list.length - 1][1];
}

function surface(id, top, height) {
  const el = document.getElementById(id);
  const w = el.clientWidth, h = el.clientHeight;
  const X = x => Math.round((x - X0) * w / DW * 10) / 10;
  const Y = y => Math.round((y - top) * h / height * 10) / 10;
  const out = [];
  const s = {
    line(x1, y1, x2, y2, c, sw = 1, dash = '') {
      const snap = sw % 2 ? .5 : 0;
      let [a, b, d, e] = [X(x1), Y(y1), X(x2), Y(y2)];
      if (b === e) b = e = Math.round(b) + snap;
      if (a === d) a = d = Math.round(a) + snap;
      out.push(`<path d="M${a} ${b}L${d} ${e}" stroke="${c}" stroke-width="${sw}"${dash && ` stroke-dasharray="${dash}"`}/>`);
    },
    rect(x, y, x2, y2, fill, stroke, r = 0) {
      const o = stroke ? .5 : 0, a = Math.round(X(x)), b = Math.round(Y(y)), c = Math.round(X(x2)), d = Math.round(Y(y2));
      out.push(`<rect x="${a + o}" y="${b + o}" width="${c - a}" height="${Math.max(d - b, 0)}" fill="${fill}"${stroke ? ` stroke="${stroke}"` : ''}${r ? ` rx="${r}"` : ''}/>`);
    },
    poly(list, c, sw, dash = '') {
      out.push(`<polyline points="${list.map(p => X(p[0]) + ',' + Y(p[1])).join(' ')}" fill="none" stroke="${c}" stroke-width="${sw}" stroke-linejoin="round"${dash && ` stroke-dasharray="${dash}"`}/>`);
    },
    area(list, fill, op = 1) {
      out.push(`<polygon points="${list.map(p => X(p[0]) + ',' + Y(p[1])).join(' ')}" fill="${fill}" fill-opacity="${op}"/>`);
    },
    ellipse(x, y, rx, ry, fill, stroke) {
      out.push(`<ellipse cx="${X(x)}" cy="${Y(y)}" rx="${rx}" ry="${ry}" fill="${fill}" stroke="${stroke}"/>`);
    },
    tri(x, y, up, c, r) {
      const a = X(x), b = Y(y), d = up ? -4 : 4;
      out.push(`<path d="M${a - r} ${b - d}h${2 * r}L${a} ${b + d}z" fill="${c}"/>`);
    },
    text(x, y, str, c = '#111', cls = 't9', anchor = 'start') {
      out.push(`<text x="${X(x)}" y="${Y(y)}" class="${cls}" fill="${c}" text-anchor="${anchor}">${str}</text>`);
    },
    grid() {
      for (let i = 0; i <= 192; i += 4) this.line(barX(i), top, barX(i), top + height, '#dcdcdc', 1, '1 4');
    },
    axis() {
      this.rect(AXIS, top, 1915, top + height, '#fff');
      this.line(AXIS, top, AXIS, top + height, '#6e8791', 1);
    },
    tick(y, label, c = '#111') {
      this.line(AXIS, y, AXIS + 4, y, '#6e8791', 1);
      this.text(1883, y + 4, label, c, 't10');
    },
    boxed(y, label, c, wide, x = 1883) {
      this.line(AXIS, y, x, y, c, 1);
      this.rect(x, y - 7, x + wide, y + 6, '#fff', '#6e8791');
      this.text(x + 1, y + 3, label, c, 't9');
    },
    done() { el.innerHTML = out.join(''); }
  };
  return s;
}

function trendColour(d) {
  const t = Math.min(Math.abs(d) / 24, 1);
  if (d < -2) return `rgb(0,${Math.round(95 + 160 * t)},0)`;
  if (d > 2) return `rgb(${Math.round(90 + 165 * t * t)},0,0)`;
  return d < 0 ? '#285000' : '#503000';
}

function drawPrice() {
  const s = surface('price', 23, 636);
  // Retracement zones
  s.rect(224, 159, 530, 216, '#f0f4fe');
  s.rect(224, 216, 530, 271, '#eae0d7');
  s.rect(1110, 354, 1671, 419, '#e6fee6');
  s.rect(1110, 419, 1671, 472, '#eae0d7');
  s.rect(1690, 401, 1758, 412, '#dcdcf6');
  s.rect(1690, 412, 1758, 426, '#e6fee6');
  s.grid();
  for (let k = 0; k < 11; k++) s.line(28, 79 + k * 57.4, AXIS, 79 + k * 57.4, '#dcdcdc', 1, '1 4');
  s.line(228, 164, 530, 631, '#d2d2d2', 1, '2 4');
  s.line(1110, 527, 1672, 77, '#d2d2d2', 1, '2 4');
  s.line(1690, 352, 1852, 413, '#c8c8c8', 1, '2 4');
  s.line(1652, 447, 1682, 370, '#c8c8c8', 1, '2 4');
  s.line(1690, 450, 1745, 352, '#d2d2d2', 1, '2 4');
  const pink = 'rgba(255,120,120,.3)', green = 'rgba(100,180,100,.27)';
  s.ellipse(225, 603, 48, 30, pink, '#f5b4b4');
  s.ellipse(491, 179, 48, 24, pink, '#f5b4b4');
  s.ellipse(843, 512, 38, 22, green, '#aad2aa');
  s.ellipse(1115, 90, 34, 22, green, '#aad2aa');
  // Tunnel
  for (let k = 1; k < SLOW.length; k++) {
    const a = barX(k + 3), b = barX(k + 4);
    const red = SLOW[k] + SLOW[k - 1] > WIDE[k] + WIDE[k - 1];
    s.area([[a, SLOW[k - 1]], [b, SLOW[k]], [b, WIDE[k]], [a, WIDE[k - 1]]], red ? '#ff5a5a' : '#5aaa5a', .25);
  }
  s.poly(WIDE.map((v, k) => [barX(k + 4), v]), '#960a0a', 2, '5 4');
  s.poly(SLOW.slice(0, 12).map((v, k) => [barX(k + 4), v]), '#000', 4);
  for (let k = 12; k < SLOW.length; k++)
    s.line(barX(k + 3), SLOW[k - 1], barX(k + 4) + .8, SLOW[k], trendColour(SLOW[k] - SLOW[k - 1]), 4);
  LONG.forEach(([c, p]) => s.poly(pairs(p), c, 4, '7 6'));
  // Fibonacci lines
  s.line(224, 159, 530, 159, '#aabeff', 1, '1 3');
  s.line(224, 216, 530, 216, '#7d3c00', 1, '5 4');
  s.line(224, 271, 530, 271, '#7dff7d', 1, '20 8');
  s.line(1110, 354, 1671, 354, '#3232dc', 1, '20 8');
  s.line(1110, 419, 1671, 419, '#7dff7d', 1, '20 8');
  s.line(1110, 472, 1671, 472, '#7d3c00', 1, '5 4');
  s.line(1690, 401, 1758, 401, '#ff8246', 1, '2 2');
  s.line(1690, 412, 1758, 412, '#1414dc', 1, '20 4');
  s.line(1690, 426, 1758, 426, '#7dff7d', 1, '15 5');
  // Candles
  CANDLES.forEach((row, i) => {
    const [t, b, hi, lo] = row.slice(1).split(',').map(Number), x = barX(i);
    s.line(x, hi, x, lo, '#000', 1);
    s.rect(x - 3, t, x + 3, b, FILL[row[0]], '#000');
  });
  s.poly([[330, 245], [434, 241]], '#b41414', 1);
  s.poly([[443, 212], [510, 202]], '#b41414', 1);
  s.poly([[738, 327], [938, 276], [976, 219]], '#b41414', 1);
  s.poly([[1091, 158], [1100, 95]], '#b41414', 1);
  s.poly([[558, 359], [719, 390], [767, 406], [795, 447]], '#149614', 1);
  s.poly([[805, 450], [814, 492], [843, 511]], '#149614', 1);
  s.poly([[1367, 382], [1433, 394], [1650, 435]], '#149614', 1);
  s.poly(pairs(ZIGZAG), '#6496ff', 1);
  s.line(386, 417, 634, 204, '#3232dc', 3);
  s.line(872, 505, 1176, 142, '#3232dc', 3);
  s.line(1120, 285, 1758, 519, '#0000ff', 3);
  // Extension targets
  [['361,80 %', 52, '#a0a0a0'], ['323,60 %', 90, '#007800'], ['261,80 %', 151, '#78ff78'], ['223,60 %', 190, '#7800be'], ['200,00 %', 213, '#afc0ff'], ['161,80 %', 251, '#ff8246'], ['100,00 %', 313, '#0000f0']].forEach(([t, y, c]) => {
    s.line(1738, y, 1852, y, c, 1, t === '100,00 %' ? '1 3' : '4 4');
    s.rect(1689, y - 15, 1734, y, '#fff', c);
    s.text(1712, y - 4, t, t === '261,80 %' ? '#5ae65a' : t === '200,00 %' ? '#8ca0dc' : c, 't9', 'middle');
  });
  s.ellipse(1840, 202, 93, 11, 'rgba(90,240,90,.27)', '#1ef01e');
  s.line(1814, 343, 1856, 246, '#000', 3, '3 5');
  s.area([[1863, 233], [1851, 241], [1863, 246]], '#000');
  [['100,00 %', 377, 156, '#8ca0dc'], ['88,20 %', 377, 212, '#7d3c00'], ['76,40 %', 377, 268, '#5ae65a'],
   ['61,80 %', 1391, 351, '#3c3cdc'], ['76,40 %', 1391, 416, '#5ae65a'], ['88,20 %', 1391, 469, '#7d3c00'],
   ['50,00 %', 1724, 397, '#ff8246'], ['61,80 %', 1724, 409, '#3232dc'], ['76,40 %', 1724, 423, '#5ae65a']].forEach(([t, x, y, c]) => s.text(x, y, t, c, 't9', 'middle'));
  WAVES.split(' ').forEach(w => {
    const [t, x, y] = w.split(','), px = +x, py = +y;
    s.rect(px - 6, py - 8, px + 6, py + 8, '#fff', '#6496ff');
    s.text(px + .5, py + 4, t, '#5a91fa', 'tag', 'middle');
  });
  BIGWAVES.split(' ').forEach(w => {
    const [t, x, y] = w.split(','), px = +x, py = t === '[3]' ? 203 : +y;
    s.rect(px - 10, py - 10, px + 10, py + 10, t === '[3]' ? 'none' : '#fff', '#6496ff', 3);
    s.text(px + .5, py + 4, t, '#222', 'plain', 'middle');
  });
  s.text(30, 657, 'IT-Finance.com - Tiempo Real', '#222', 'plain');
  s.axis();
  ['1,7', '1,6', '1,5', '1,4', '1,3', '1,2', '1,1', '1', '0,9', '0,8', '0,7', '0,6'].forEach((t, k) => s.tick(k ? 79 + (k - 1) * 57.4 : 27, t));
  s.boxed(342, '1,13631', '#0a960a', 42, 1880);
  s.boxed(350, '1,12570', '#966400', 42, 1880);
  s.boxed(359, '1,12256', '#b40a0a', 42, 1880);
  s.done();
}

function drawTrains() {
  const s = surface('trenes', 660, 86);
  s.rect(28, 667, 1787, 682, '#daf5da');
  s.rect(28, 727, 1787, 742, '#fedada');
  s.grid();
  [667, 682, 727, 742].forEach(y => s.line(28, y, 1787, y, '#000', 1));
  s.line(28, 704, 1787, 704, '#0000a5', 2, '5 4');
  const sig = TRAIN.map((p, k) => k ? [p[0] + 2, (p[1] + TRAIN[k - 1][1]) / 2] : p);
  for (let k = 1; k < TRAIN.length; k++) {
    const up = TRAIN[k][1] <= TRAIN[k - 1][1];
    s.area([TRAIN[k - 1], TRAIN[k], sig[k], sig[k - 1]], up ? '#46be46' : '#f05050', .35);
  }
  for (let i = 78; i < 184; i++) {
    const a = barX(i), b = barX(i + 1), p = at(TRAIN_BIG, a), q = at(TRAIN_BIG, b), u = at(TRAIN_DASH, a), v = at(TRAIN_DASH, b);
    if (u !== null) s.area([[a, p], [b, q], [b, v], [a, u]], q < v ? '#3c3ccd' : '#c832c8', .3);
  }
  s.poly(sig, '#222', 1, '3 2');
  for (let k = 1; k < TRAIN.length; k++) s.poly([TRAIN[k - 1], TRAIN[k]], TRAIN[k][1] <= TRAIN[k - 1][1] ? '#000' : '#dc1414', 1.500);
  for (let k = 1; k < TRAIN_BIG.length; k++) s.poly([TRAIN_BIG[k - 1], TRAIN_BIG[k]], TRAIN_BIG[k][1] <= TRAIN_BIG[k - 1][1] ? '#00008c' : '#ff0000', 4);
  s.poly(TRAIN_DASH, '#1e1e1e', 3, '5 5');
  pairs(TRAIN_DOWN).forEach(p => s.tri(p[0], p[1], false, '#b40000', 5));
  pairs(TRAIN_UP).forEach(p => s.tri(p[0], p[1], true, '#0000b4', 5));
  s.axis();
  s.boxed(667, '100', '#111', 17);
  s.text(1884, 699, '60', '#111', 't9');
  s.boxed(677, '87,035', '#e61e1e', 34);
  s.boxed(686, '80', '#111', 12);
  s.boxed(705, '50', '#0000b4', 12);
  s.boxed(721, '37,596', '#111', 34);
  s.boxed(728, '20', '#111', 12);
  s.boxed(740, '0', '#111', 7);
  s.done();
}

function drawWilly() {
  const s = surface('willy', 747, 82);
  s.grid();
  for (const c in WILLY_BANDS) pairs(WILLY_BANDS[c]).forEach(p => s.rect(p[0], 747, p[1], 829, c));
  s.line(28, 753, 1787, 753, '#000', 1, '4 3');
  s.line(28, 825, 1787, 825, '#000', 1, '4 3');
  s.line(28, 789, 1787, 789, '#000096', 2, '5 4');
  const colours = { o: '#ff9600', b: '#0000c8', g: '#00c800', r: '#910000' };
  const pts = WILLY.map(w => w.slice(1).split(',').map(Number));
  for (let k = 1; k < pts.length; k++) {
    const [a, b] = [pts[k - 1], pts[k]];
    if (Math.min(a[1], b[1]) < 771) s.area([[a[0], 771], [a[0], Math.min(771, a[1])], [b[0], Math.min(771, b[1])], [b[0], 771]], '#329646', .5);
    if (Math.max(a[1], b[1]) > 807) s.area([[a[0], 807], [a[0], Math.max(807, a[1])], [b[0], Math.max(807, b[1])], [b[0], 807]], '#782828', .5);
  }
  s.line(28, 771, 1787, 771, '#7878c8', 3);
  s.line(28, 771, 1787, 771, '#000082', 1);
  s.line(28, 807, 1787, 807, '#eb7878', 3);
  s.line(28, 807, 1787, 807, '#b40000', 1);
  for (let k = 1; k < pts.length; k++) s.poly([pts[k - 1], pts[k]], colours[WILLY[k][0]], 4);
  [[673, 789], [1253, 789], [1282, 789]].forEach(p => s.tri(p[0], p[1], false, '#b40000', 6));
  [[901, 790], [1272, 790], [1748, 790]].forEach(p => s.tri(p[0], p[1], true, '#0000a5', 6));
  s.axis();
  s.boxed(753, '0', '#111', 7);
  s.boxed(768, '-25', '#0000a0', 15);
  s.text(1884, 801, '-60', '#111', 't9');
  s.boxed(777, '-31,726', '#ff9600', 34, 1881);
  s.boxed(789, '-50', '#0000a0', 15);
  s.boxed(808, '-75', '#dc0000', 15);
  s.boxed(822, '-100', '#111', 21);
  s.done();
}

function drawAwesome() {
  const s = surface('awesome', 830, 106), zero = 892;
  s.grid();
  [841, 858, 875, 909, 926].forEach(y => s.line(28, y, AXIS, y, '#dcdcdc', 1, '1 4'));
  for (let i = 31; i <= 184; i++) {
    const x = barX(i), g = at(AO_SIG, x), gp = at(AO_SIG, x - STEP), v = at(AO, x), vp = at(AO, x - STEP);
    if (g !== null && gp !== null) {
      const up = g <= gp;
      s.rect(x - 4, Math.min(zero, g), x + 3, Math.max(zero, g), up ? '#d2ffd2' : '#ffdcdc', up ? '#b9ebb9' : '#f0bebe');
    }
    if (v !== null && vp !== null) {
      const c = v < zero ? (v < vp ? '#0000ff' : '#ff00ff') : (v < vp ? '#00968c' : '#ff0000');
      s.rect(x - 4, Math.min(zero, v), x + 4, Math.max(zero, v), c);
      s.line(x + 3, Math.min(zero, v), x + 3, Math.max(zero, v), 'rgba(0,0,0,.45)', 1);
      s.line(x - 4, Math.min(zero, v), x - 4, Math.max(zero, v), 'rgba(255,255,255,.7)', 1);
    }
  }
  s.line(28, zero, 1787, zero, '#6e6eff', 3);
  s.line(28, zero, 1787, zero, '#0000dc', 1);
  for (let k = 1; k < AO.length; k++) s.poly([AO[k - 1], AO[k]], AO[k][1] <= AO[k - 1][1] ? '#000032' : '#b400b4', 4);
  for (let k = 1; k < AO_SIG.length; k++) s.poly([AO_SIG[k - 1], AO_SIG[k]], AO_SIG[k][1] <= AO_SIG[k - 1][1] ? '#64ff64' : '#ff9600', 4);
  pairs('596,894 739,913 825,928 1311,900 1396,926 1682,902').forEach(p => s.tri(p[0], p[1], true, '#00f5ff', 5));
  pairs('635,881 1005,868 768,912 1358,904 1625,890').forEach(p => s.tri(p[0], p[1], false, '#fff000', 5));
  s.axis();
  [[841, '0,3'], [858, '0,2'], [909, '-0,1'], [926, '-0,2']].forEach(([y, t]) => s.tick(y, t));
  s.boxed(873, '0,0749', '#b400b4', 34);
  s.boxed(880, '0,0749', '#ff00ff', 34);
  s.boxed(890, '0,0123', '#64e664', 34);
  s.boxed(899, '0', '#ff00ff', 7);
  s.done();
}

function drawForce() {
  const s = surface('barra', 937, 58);
  s.rect(29, 937, 1791, 995, '#fffe8a');
  pairs(FORCE).forEach(p => s.rect(p[0], 937, p[1], 995, '#3cff3c'));
  s.grid();
  s.line(28, 967, 1786, 967, '#000', 1);
  s.axis();
  s.text(1884, 945, '0,505', '#111', 't10');
  s.boxed(967, '0,5000', '#111', 30);
  s.text(1884, 993, '0,495', '#111', 't10');
  s.done();
}

function drawYears() {
  const s = surface('years', 996, 14);
  for (let y = 1980; y <= 2028; y++) {
    const x = barX((y - 1980) * 4);
    s.line(x, 996, x, 998, '#6e8791', 1);
    if (y > 1980) s.text(x, 1008, y, '#111', 't9', 'middle');
  }
  s.done();
}

function draw() {
  drawPrice();
  drawTrains();
  drawWilly();
  drawAwesome();
  drawForce();
  drawYears();
}
draw();
addEventListener('resize', draw);
```
